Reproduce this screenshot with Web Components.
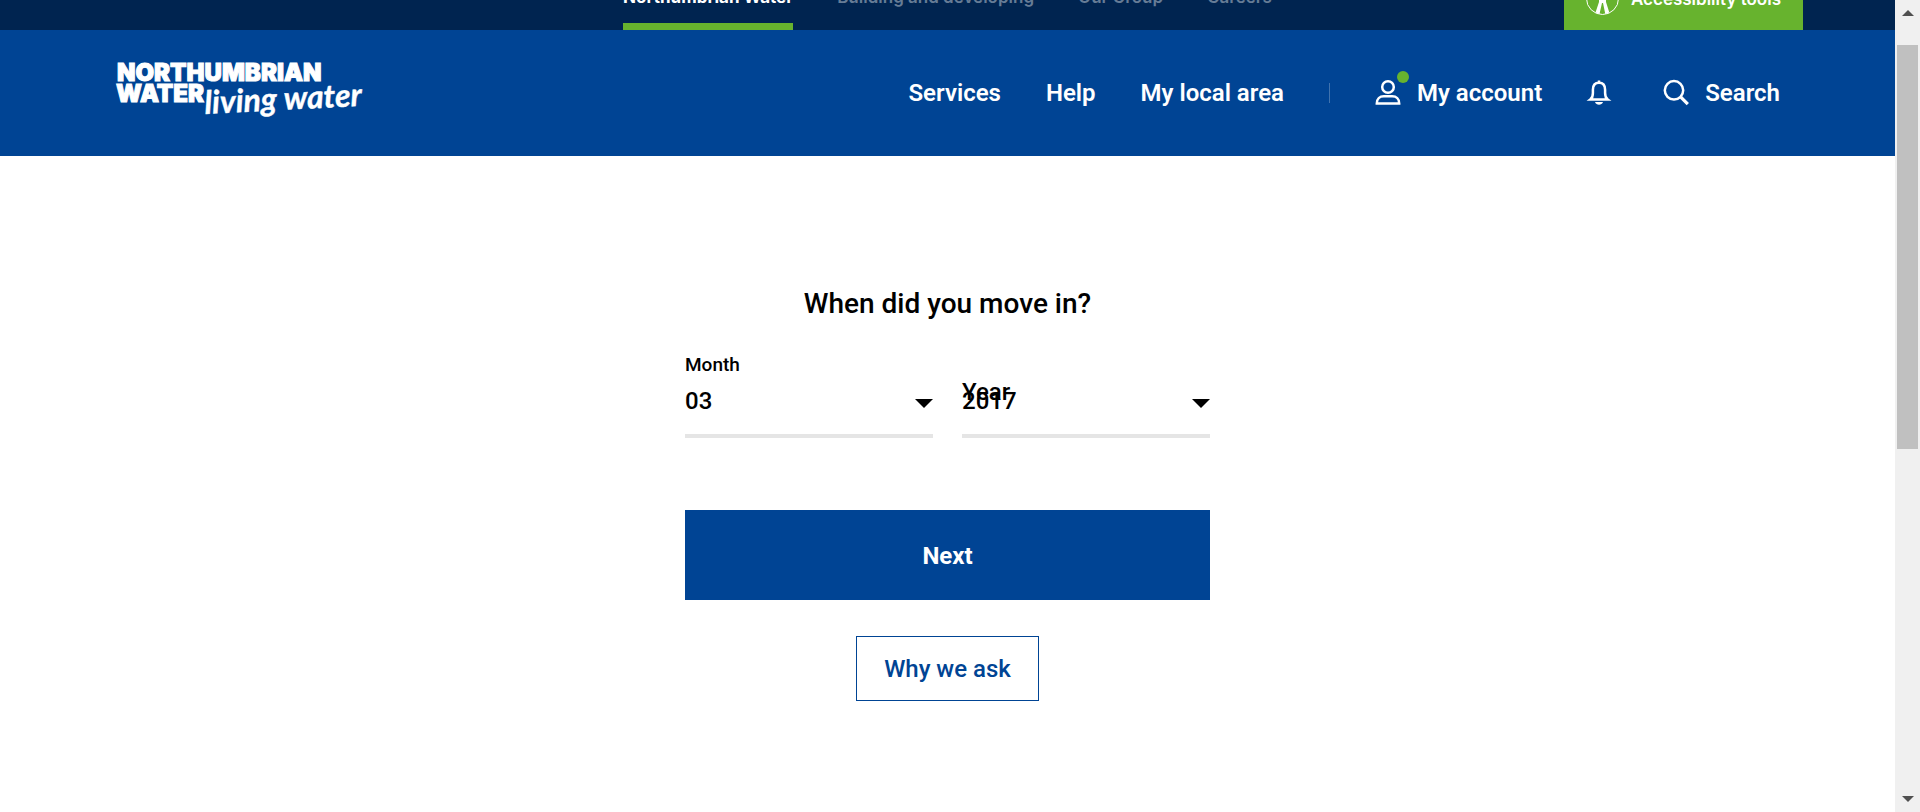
<!DOCTYPE html>
<html lang="en">
<head>
<meta charset="utf-8">
<title>When did you move in? | Northumbrian Water</title>
<style>
  body { margin: 0; background: #fff; font-family: Roboto, sans-serif; }
</style>
</head>
<body>
<nw-page>
  <nw-topbar></nw-topbar>
  <nw-header></nw-header>
  <nw-move-form></nw-move-form>
</nw-page>

<script>
function define(name, html) {
  const template = document.createElement('template');
  template.innerHTML = html;
  customElements.define(name, class extends HTMLElement {
    constructor() {
      super();
      this.attachShadow({ mode: 'open' }).append(template.content.cloneNode(true));
    }
  });
}

define('nw-page', `
<style>
  :host { display: flex; height: 100vh; overflow: hidden; }
  .view { flex: 1; min-width: 0; overflow: hidden; }
</style>
<div class="view"><slot></slot></div>
<nw-scrollbar aria-hidden="true"></nw-scrollbar>`);

define('nw-scrollbar', `
<style>
  :host { display: flex; flex-direction: column; align-items: center; width: 25px; background: #f0f0f0; box-sizing: border-box; padding: 10px 0; }
  svg { display: block; width: 12px; height: 6px; fill: #505050; }
  .track { flex: 1; display: flex; flex-direction: column; width: 21px; padding: 29px 0; }
  .thumb { flex: 56; background: #c0c0c0; }
  .rest { flex: 44; }
</style>
<svg viewBox="0 0 12 6"><path d="M0 6 6 0l6 6z"/></svg>
<div class="track"><div class="thumb"></div><div class="rest"></div></div>
<svg viewBox="0 0 12 6"><path d="M0 0h12L6 6z"/></svg>`);

/* The page is scrolled, so only the lower half of this bar is in view. */
define('nw-topbar', `
<style>
  :host { display: grid; grid-template-columns: 1fr auto 1fr; height: 66px; margin-top: -36px; padding: 0 92px; background: #002450; font: 700 17px/24px Inter, sans-serif; }
  nav { grid-column: 2; display: flex; gap: 44px; }
  a { box-sizing: border-box; padding-top: 21px; color: #667c96; font-weight: 600; text-decoration: none; border-bottom: 7px solid transparent; }
  a[aria-current] { color: #fff; font-weight: 700; border-color: #67b32e; }
  button { justify-self: end; display: flex; align-items: center; gap: 12px; border: 0; padding: 3px 22px 0; background: #67b32e; color: #fff; font: inherit; font-weight: 600; }
  svg { display: block; width: 33px; height: 33px; }
</style>
<nav aria-label="Sites">
  <a href="#" aria-current="page">Northumbrian Water</a>
  <a href="#">Building and developing</a>
  <a href="#">Our Group</a>
  <a href="#">Careers</a>
</nav>
<button type="button">
  <svg viewBox="0 0 33 33"><circle cx="16.5" cy="16.5" r="16" fill="none" stroke="#fff"/><circle cx="16.5" cy="7" r="3" fill="#fff"/><path fill="#fff" d="M6 11l8 1.500h5L27 11v2.500l-7 1.800V20l3.300 10.500-4 1.500L17 21h-1l-2.500 11-4-1.500L13 20v-4.700l-7-1.800z"/></svg>
  Accessibility tools
</button>`);

define('nw-logo', `
<style>
  :host { display: block; }
  svg { display: block; width: 252px; height: 66px; fill: #fff; overflow: visible; }
  .name { font: 900 24px Inter, sans-serif; }
  .tag { font: italic 700 32px Lato, sans-serif; }
</style>
<svg viewBox="0 0 252 66" role="img" aria-label="Northumbrian Water living water">
  <text class="name" stroke="#fff" x="2" y="21">NORTHUMBRIAN</text>
  <text class="name" stroke="#fff" x="1" y="42">WATER</text>
  <text class="tag" stroke="#fff" stroke-width=".4" transform="translate(90 54) rotate(-3)">living water</text>
</svg>`);

define('nw-header', `
<style>
  :host { display: flex; align-items: center; justify-content: space-between; height: 126px; padding: 0 115px; background: #004494; }
  nav { display: flex; align-items: center; gap: 45px; font: 600 24px/30px Roboto, sans-serif; color: #fff; white-space: nowrap; }
  a { display: flex; align-items: center; gap: 16px; color: inherit; text-decoration: none; }
  hr { width: 1px; height: 20px; margin: 0; border: 0; background: #4073ae; }
  button { border: 0; padding: 0 5px 0 0; background: none; color: inherit; }
  svg { display: block; width: 26px; height: 26px; overflow: visible; }
</style>
<nw-logo></nw-logo>
<nav aria-label="Main">
  <a href="#">Services</a>
  <a href="#">Help</a>
  <a href="#">My local area</a>
  <hr>
  <a href="#"><svg viewBox="0 0 26 26" fill="none" stroke="#fff" stroke-width="2.500"><circle cx="13" cy="7" r="5.800"/><path d="M1.800 23.500c0-4.500 3-7.200 7-7.200h8.400c4 0 7 2.700 7 7.200z"/><circle cx="28" cy="-3" r="6" fill="#67b32e" stroke="none"/></svg>My account</a>
  <button type="button" aria-label="Notifications"><svg viewBox="0 0 26 26" fill="none" stroke="#fff" stroke-width="2.500"><path d="M3.300 19.500c2-1.500 2.600-3.400 2.600-6.600V9.800c0-4.300 2.300-7 6.100-7s6.100 2.700 6.100 7v3.100c0 3.200.6 5.100 2.600 6.600z"/><path d="M12 .5v2.500"/><path fill="#fff" stroke="none" d="M8 22h8c-.7 1.700-2.100 2.700-4 2.700s-3.300-1-4-2.700z"/></svg></button>
  <a href="#"><svg viewBox="0 0 26 26" fill="none" stroke="#fff" stroke-width="2.500"><circle cx="11" cy="10.300" r="9.200"/><path d="m17.600 16.900 7.200 7.200" stroke-width="3.200"/></svg>Search</a>
</nav>`);

define('nw-date-field', `
<style>
  :host { display: grid; position: relative; padding-top: 30px; color: #000; }
  label { position: absolute; left: 0; top: 30px; font: 500 24px/24px Roboto, sans-serif; pointer-events: none; }
  :host([floated]) label { top: 3px; font-size: 19px; }
  select, svg { grid-area: 1 / 1; }
  select { appearance: none; width: 100%; height: 58px; margin: 0; border: 0; border-bottom: 4px solid #e5e5e5; border-radius: 0; padding: 0 24px 13px 0; background: none; color: inherit; font: 500 24px/30px Roboto, sans-serif; }
  svg { justify-self: end; width: 18px; height: 9px; margin-top: 19px; pointer-events: none; }
</style>
<select id="field"></select>
<label for="field"></label>
<svg viewBox="0 0 18 9"><path d="M0 0h18L9 9z"/></svg>`);

define('nw-move-form', `
<style>
  :host { display: block; padding: 130px 24px 0; }
  form { display: flex; flex-direction: column; align-items: center; max-width: 525px; margin: 0 auto; }
  h1 { margin: 0 0 28px; font: 500 28px/36px Roboto, sans-serif; color: #000; }
  .fields { display: grid; grid-template-columns: 1fr 1fr; gap: 29px; width: 100%; margin-bottom: 72px; }
  button { font: 500 24px/30px Roboto, sans-serif; }
  .next { width: 100%; border: 0; padding: 31px 30px 29px; background: #004494; color: #fff; font-weight: 700; }
  .why { margin-top: 36px; border: 1px solid #004494; padding: 17px 27px 16px; background: #fff; color: #004494; }
</style>
<form>
  <h1>When did you move in?</h1>
  <div class="fields">
    <nw-date-field floated name="Month" value="03"></nw-date-field>
    <nw-date-field name="Year" value="2017"></nw-date-field>
  </div>
  <button class="next" type="button">Next</button>
  <button class="why" type="button">Why we ask</button>
</form>`);

/* Fill each date field from its attributes. */
for (const field of document.querySelector('nw-move-form').shadowRoot.querySelectorAll('nw-date-field')) {
  field.shadowRoot.querySelector('label').textContent = field.getAttribute('name');
  field.shadowRoot.querySelector('select').add(new Option(field.getAttribute('value')));
}
</script>
</body>
</html>
